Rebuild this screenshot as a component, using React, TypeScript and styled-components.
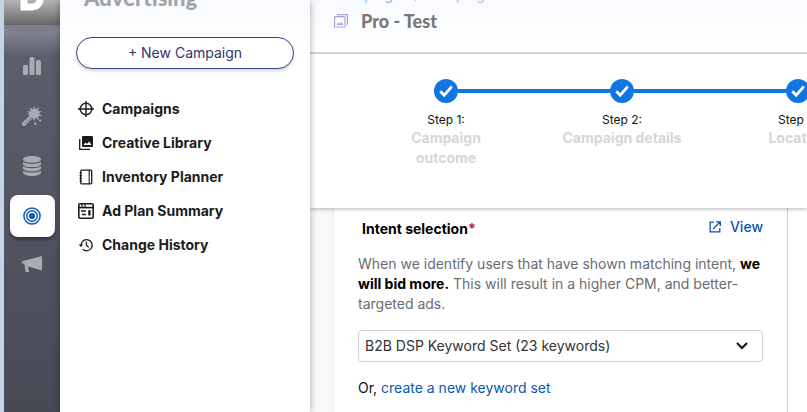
import React from "react";
import styled, { createGlobalStyle } from "styled-components";

const GlobalStyle = createGlobalStyle`
  *, *::before, *::after { box-sizing: border-box; }
  html, body { margin: 0; }
  body {
    font-family: Inter, "Liberation Sans", sans-serif;
    font-size: 14px;
    line-height: 20px;
    color: #111;
    background: #fff;
    overflow: hidden;
  }
  a { color: #0b57ad; text-decoration: none; }
`;

const Shell = styled.div`
  display: flex;
  height: 100vh;
  overflow: hidden;
  border-left: 4px solid #c6d2e6;
`;

const Rail = styled.nav`
  flex: 0 0 56px;
  display: flex;
  flex-direction: column;
  align-items: center;
  background: linear-gradient(#8d8f9b 25px, #5b5e6b 56px, #474955 100%);
`;

const Brand = styled.div`
  align-self: stretch;
  height: 25px;
  display: flex;
  justify-content: center;
  align-items: flex-end;
  padding-bottom: 14px;
  background: linear-gradient(#b4b4b4, #666);
`;

const BrandCurve = styled.div`
  align-self: stretch;
  height: 9px;
  margin-bottom: 11px;
  background: #7c7e88;
  border-radius: 0 0 50% 50% / 0 0 100% 100%;
`;

const RailList = styled.ul`
  list-style: none;
  margin: 0;
  padding: 0;
  display: flex;
  flex-direction: column;
  gap: 8px;
`;

const RailButton = styled.button<{ $active?: boolean }>`
  display: flex;
  align-items: center;
  justify-content: center;
  width: 45px;
  height: 42px;
  padding: 0;
  border: 0;
  border-radius: 8px;
  cursor: pointer;
  color: ${(p) => (p.$active ? "#0f5cb8" : "#a9aab2")};
  background: ${(p) => (p.$active ? "#fff" : "transparent")};
  box-shadow: ${(p) => (p.$active ? "0 3px 3px rgba(0, 0, 0, 0.35)" : "none")};
`;

const Panel = styled.aside`
  flex: 0 0 250px;
  display: flex;
  flex-direction: column;
  padding: 0 16px;
  background: linear-gradient(#f8fafe, #fff 48px);
  box-shadow: 0 0 7px rgba(0, 0, 0, 0.35);
  z-index: 3;
`;

const PanelTitle = styled.h2`
  height: 9px;
  margin: 0 8px 28px;
  display: flex;
  align-items: flex-end;
  font-family: Lato, Inter, sans-serif;
  font-size: 22px;
  line-height: 22px;
  font-weight: 900;
  color: #a2a3a6;
`;

const NewButton = styled.button`
  height: 32px;
  border: 1px solid #2f4788;
  border-radius: 16px;
  background: #fff;
  color: #35356d;
  font: inherit;
  cursor: pointer;
  box-shadow: 0 2px 3px rgba(0, 0, 0, 0.16);
`;

const Menu = styled.ul`
  list-style: none;
  margin: 30px 0 0;
  padding: 0;
  display: flex;
  flex-direction: column;
  gap: 14px;
`;

const MenuLink = styled.a`
  display: flex;
  align-items: center;
  gap: 8px;
  padding-left: 2px;
  font-weight: 700;
  && { color: #1c1c1c; }
`;

const Main = styled.main`
  flex: 1;
  min-width: 0;
  display: flex;
  flex-direction: column;
`;

const TopBar = styled.header`
  border-bottom: 2px solid #d2d3d4;
  padding-left: 24px;
  padding-bottom: 21px;
  background: linear-gradient(#f8fafe, #fff 48px);
  z-index: 2;
`;

const Crumbs = styled.nav`
  display: flex;
  align-items: flex-end;
  gap: 6px;
  height: 5px;
  margin-bottom: 6px;
  white-space: nowrap;
  color: #b9bcc1;
  a { color: #85b5e6; }
`;

const TitleRow = styled.div`
  display: flex;
  align-items: center;
  gap: 13px;
`;

const Title = styled.h1`
  margin: 0;
  font-family: Lato, Inter, sans-serif;
  font-size: 18px;
  line-height: 20px;
  font-weight: 900;
  color: #77787b;
`;

const Stepper = styled.ol`
  list-style: none;
  margin: 0;
  padding: 24px 0 40px 48px;
  display: flex;
  background: #fff;
  box-shadow: 0 1px 4px rgba(0, 0, 0, 0.3);
  overflow: hidden;
  z-index: 1;
`;

const StepItem = styled.li`
  flex: 0 0 176px;
  display: flex;
  flex-direction: column;
  align-items: center;
  text-align: center;
`;

const Track = styled.div`
  align-self: stretch;
  display: flex;
  align-items: center;
  height: 26px;
  margin-bottom: 7px;
`;

const Rule = styled.span<{ $hidden?: boolean }>`
  flex: 1;
  height: 4px;
  background: ${(p) => (p.$hidden ? "transparent" : "#1276e2")};
`;

const StepNumber = styled.span`
  font-size: 12px;
  line-height: 17px;
  color: #111;
`;

const StepName = styled.span`
  max-width: 124px;
  font-weight: 700;
  color: #d6d6d6;
`;

const Body = styled.div`
  flex: 1;
  display: flex;
  padding-left: 24px;
  background: #f8f9fb;
`;

const BodyEdge = styled.div`
  flex: 0 0 19px;
  background: #fff;
`;

const Card = styled.section`
  flex: 1;
  padding: 9px 24px;
  background: #fff;
  border-right: 1px solid #ccc;
  box-shadow: -1px 0 2px rgba(0, 0, 0, 0.06);
`;

const CardHead = styled.div`
  display: flex;
  justify-content: space-between;
  padding-left: 4px;
  margin-bottom: 15px;
`;

const FieldLabel = styled.label`
  padding-top: 2px;
  font-weight: 700;
  color: #000;
`;

const Required = styled.span`
  color: #c4173c;
`;

const ViewLink = styled.a`
  display: flex;
  align-items: center;
  align-self: flex-start;
  gap: 9px;
  font-weight: 500;
`;

const Help = styled.p`
  margin: 0 0 16px;
  color: #6b6c70;
  strong { color: #000; font-weight: 700; }
`;

const SelectBox = styled.div`
  display: grid;
  align-items: center;
  margin-bottom: 16px;
  > * { grid-area: 1 / 1; }
  > svg { justify-self: end; margin-right: 14px; pointer-events: none; }
`;

const Select = styled.select`
  appearance: none;
  width: 100%;
  height: 32px;
  padding: 0 40px 0 6px;
  border: 1px solid #d0d0d0;
  border-radius: 4px;
  background: #fff;
  color: #333;
  font: inherit;
`;

const Plain = styled.p`
  margin: 0;
`;

const BrandMark = () => (
  <svg width="26" height="28" viewBox="0 0 26 28" fill="none" role="img" aria-label="Home">
    <path d="M5 4h8c6 0 8.500 4 8.500 9.500S19 24 13 24H5z" stroke="#fff" strokeWidth="7" />
  </svg>
);

const BarsIcon = () => (
  <svg width="18" height="18" viewBox="0 0 18 18" fill="currentColor" aria-hidden="true">
    <rect x="0" y="8" width="5" height="10" rx="1.6" />
    <rect x="6.5" y="0" width="5" height="18" rx="1.6" />
    <rect x="13" y="3" width="5" height="15" rx="1.6" />
  </svg>
);

const WandIcon = () => (
  <svg width="20" height="20" viewBox="0 0 20 20" fill="currentColor" aria-hidden="true">
    <path d="M12.300 0l1.400 3.600 3.300-2.400-1 4 4-.2-3.200 2.600 3.200 2.300-4 .1 1 4-3.400-2.400-1.400 3.600-1.500-3.500-1.700 1.300-1.300-3.600-2.200-.7 2-1.300L4.800 5.300l4 .1-1-4 3.200 2.200z" />
    <path d="M8.800 8.500l3 2.600-8.300 8.200a2 2 0 0 1-3-2.800z" />
    <path d="M10 11L2.500 18" fill="none" stroke="#5a5d6a" strokeWidth="0.700" />
    <rect x="12.400" y="16.500" width="2.200" height="2.200" transform="rotate(20 13 17)" />
    <rect x="17.300" y="13.500" width="2" height="2" transform="rotate(20 18 14)" />
  </svg>
);

const DatabaseIcon = () => (
  <svg width="18" height="20" viewBox="0 0 18 20" fill="currentColor" aria-hidden="true">
    <path d="M0 3.500C0-1.100 18-1.100 18 3.500v13c0 4.600-18 4.600-18 0z" />
    <path d="M0 4.500c1 3.700 17 3.700 18 0M0 8.900c1 3.700 17 3.700 18 0M0 13.200c1 3.700 17 3.700 18 0" fill="none" stroke="#565965" strokeWidth="1.200" />
  </svg>
);

const TargetIcon = () => (
  <svg width="18" height="18" viewBox="0 0 18 18" fill="none" stroke="currentColor" strokeWidth="1.500" aria-hidden="true">
    <circle cx="9" cy="9" r="8.100" />
    <circle cx="9" cy="9" r="5.300" />
    <circle cx="9" cy="9" r="3.100" fill="currentColor" stroke="none" />
  </svg>
);

const MegaphoneIcon = () => (
  <svg width="20" height="20" viewBox="0 0 20 20" fill="currentColor" aria-hidden="true">
    <path d="M20 0v14.500L6 10.500 7 16H3.500L2.300 7.500H0V5.200z" />
  </svg>
);

const CrosshairIcon = () => (
  <svg width="16" height="16" viewBox="0 0 16 16" fill="none" stroke="currentColor" strokeWidth="1.400" aria-hidden="true">
    <circle cx="8" cy="8" r="5.800" />
    <path d="M8 0v16M0 8h16" />
  </svg>
);

const LibraryIcon = () => (
  <svg width="16" height="16" viewBox="0 0 16 16" aria-hidden="true">
    <rect x="4" y="1" width="11" height="11" rx="1" fill="currentColor" />
    <path d="M5.500 10l2-2.500 1.500 1.600 2-2.600 2.600 3.500z" fill="#fff" />
    <path d="M1.700 4v10.300H12" fill="none" stroke="currentColor" strokeWidth="1.300" />
  </svg>
);

const NotebookIcon = () => (
  <svg width="16" height="16" viewBox="0 0 16 16" fill="none" stroke="currentColor" aria-hidden="true">
    <rect x="2.700" y="1.200" width="11" height="13.600" rx="1" strokeWidth="1.300" />
    <path d="M11.200 1v14" strokeWidth="1.100" />
    <path d="M1.500 4h2.500M1.500 6.700h2.500M1.500 9.400h2.500M1.500 12h2.500" strokeWidth="1.200" />
  </svg>
);

const SummaryIcon = () => (
  <svg width="16" height="16" viewBox="0 0 16 16" fill="none" stroke="currentColor" aria-hidden="true">
    <rect x="0.800" y="0.800" width="14.400" height="14.400" rx="1.200" strokeWidth="1.600" />
    <path d="M1 4.600h14" strokeWidth="1.600" />
    <path d="M4 1v3M7 1v3" strokeWidth="1.200" />
    <path d="M3 8h5M4 11.500h4" strokeWidth="1.600" />
    <path d="M11.400 7.200v5.300" strokeWidth="2.400" />
  </svg>
);

const HistoryIcon = () => (
  <svg width="16" height="16" viewBox="0 0 16 16" fill="none" stroke="currentColor" strokeWidth="1.300" aria-hidden="true">
    <path d="M3 8A5.600 5.600 0 1 1 4.700 12.200" />
    <path d="M0.600 7.400h4.600L2.900 10z" fill="currentColor" stroke="none" />
    <path d="M8.400 4.800v3.500l2.300 2" />
  </svg>
);

const GalleryIcon = () => (
  <svg width="14" height="14" viewBox="0 0 14 14" fill="none" stroke="#b4a0dc" aria-hidden="true">
    <rect x="0.600" y="2.600" width="10.400" height="10.400" rx="0.600" strokeWidth="1.200" />
    <path d="M3 0.600h10.400V11" strokeWidth="1.200" />
    <path d="M2.400 11l1.800-2.400 1.300 1.300L7.400 8l2 3z" fill="#b4a0dc" stroke="none" />
  </svg>
);

const CheckCircle = () => (
  <svg width="24" height="24" viewBox="0 0 24 24" role="img" aria-label="Completed">
    <circle cx="12" cy="12" r="12" fill="#1276e2" />
    <path d="M6.300 12.300l3.900 4 7.600-8.800" fill="none" stroke="#fff" strokeWidth="2.800" />
  </svg>
);

const ExternalIcon = () => (
  <svg width="12" height="12" viewBox="0 0 12 12" fill="none" stroke="currentColor" strokeWidth="1.300" aria-hidden="true">
    <path d="M5 1.200H1.200v9.600h9.600V7M7 .8h4.300v4.300M11 1L4 8" />
  </svg>
);

const Chevron = () => (
  <svg width="14" height="10" viewBox="0 0 14 10" fill="none" stroke="#111" strokeWidth="2" aria-hidden="true">
    <path d="M2 2l5 5 5-5" />
  </svg>
);

const railItems = [
  { name: "Reports", icon: <BarsIcon /> },
  { name: "Optimize", icon: <WandIcon /> },
  { name: "Data", icon: <DatabaseIcon /> },
  { name: "Advertising", icon: <TargetIcon />, active: true },
  { name: "Announcements", icon: <MegaphoneIcon /> },
];

const menuItems = [
  { name: "Campaigns", icon: <CrosshairIcon /> },
  { name: "Creative Library", icon: <LibraryIcon /> },
  { name: "Inventory Planner", icon: <NotebookIcon /> },
  { name: "Ad Plan Summary", icon: <SummaryIcon /> },
  { name: "Change History", icon: <HistoryIcon /> },
];

const steps = ["Campaign outcome", "Campaign details", "Location"];

export default function App() {
  return (
    <>
      <GlobalStyle />
      <Shell>
        <Rail aria-label="Products">
          <Brand><BrandMark /></Brand>
          <BrandCurve />
          <RailList>
            {railItems.map((item) => (
              <li key={item.name}>
                <RailButton type="button" aria-label={item.name} $active={item.active}>
                  {item.icon}
                </RailButton>
              </li>
            ))}
          </RailList>
        </Rail>

        <Panel>
          <PanelTitle>Advertising</PanelTitle>
          <NewButton type="button">+ New Campaign</NewButton>
          <Menu>
            {menuItems.map((item) => (
              <li key={item.name}>
                <MenuLink href="#">{item.icon}{item.name}</MenuLink>
              </li>
            ))}
          </Menu>
        </Panel>

        <Main>
          <TopBar>
            <Crumbs aria-label="Breadcrumb">
              <a href="#">Campaigns</a>
              <span>/</span>
              <span>Campaign details</span>
            </Crumbs>
            <TitleRow>
              <GalleryIcon />
              <Title>Pro - Test</Title>
            </TitleRow>
          </TopBar>

          <Stepper>
            {steps.map((name, i) => (
              <StepItem key={name}>
                <Track>
                  <Rule $hidden={i === 0} />
                  <CheckCircle />
                  <Rule />
                </Track>
                <StepNumber>Step {i + 1}:</StepNumber>
                <StepName>{name}</StepName>
              </StepItem>
            ))}
          </Stepper>

          <Body>
            <Card>
              <CardHead>
                <FieldLabel htmlFor="intent">Intent selection<Required>*</Required></FieldLabel>
                <ViewLink href="#"><ExternalIcon />View</ViewLink>
              </CardHead>
              <Help>
                When we identify users that have shown matching intent, <strong>we will bid more.</strong>{" "}
                This will result in a higher CPM, and better-targeted ads.
              </Help>
              <SelectBox>
                <Select id="intent" defaultValue="b2b">
                  <option value="b2b">B2B DSP Keyword Set (23 keywords)</option>
                </Select>
                <Chevron />
              </SelectBox>
              <Plain>Or, <a href="#">create a new keyword set</a></Plain>
            </Card>
            <BodyEdge />
          </Body>
        </Main>
      </Shell>
    </>
  );
}
